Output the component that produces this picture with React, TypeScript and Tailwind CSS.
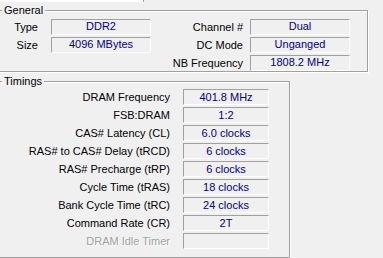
const general: [string, string, string, string][] = [
  ["Type", "DDR2", "Channel #", "Dual"],
  ["Size", "4096 MBytes", "DC Mode", "Unganged"],
  ["", "", "NB Frequency", "1808.2 MHz"],
];

const timings: [string, string, boolean?][] = [
  ["DRAM Frequency", "401.8 MHz"],
  ["FSB:DRAM", "1:2"],
  ["CAS# Latency (CL)", "6.0 clocks"],
  ["RAS# to CAS# Delay (tRCD)", "6 clocks"],
  ["RAS# Precharge (tRP)", "6 clocks"],
  ["Cycle Time (tRAS)", "18 clocks"],
  ["Bank Cycle Time (tRC)", "24 clocks"],
  ["Command Rate (CR)", "2T"],
  ["DRAM Idle Timer", "", true],
];

const ValueBox = ({ value, width }: { value: string; width: string }) => (
  <div
    className={`${width} h-[16px] flex items-center justify-center border border-t-[#a0a0a0] border-l-[#a0a0a0] border-b-white border-r-white bg-[#f0f0f0] text-[#000080] leading-none`}
  >
    {value}
  </div>
);

const Frame = ({ title, className, children }: { title: string; className: string; children: React.ReactNode }) => (
  <div
    className={`relative ml-[-4px] border border-[#a0a0a0] shadow-[1px_1px_0_#ffffff,inset_1px_1px_0_#ffffff] ${className}`}
  >
    <span className="absolute left-[5px] top-[-7px] px-[2px] bg-[#f0f0f0] leading-[13px]">{title}</span>
    {children}
  </div>
);

export default function App() {
  return (
    <div
      className="w-[383px] h-[258px] overflow-hidden bg-[#f0f0f0] text-[11px] text-black flex flex-col"
      style={{ fontFamily: '"Liberation Sans", Arial, sans-serif' }}
    >
      <div className="w-[144px] h-[2px] bg-white border-r border-[#a0a0a0]" />

      {/* General */}
      <Frame title="General" className="mt-[8px] w-[372px] h-[70px] pt-[8px]">
        <div className="flex flex-col gap-[2px]">
          {general.map(([l1, v1, l2, v2], i) => (
            <div key={i} className="flex items-center h-[16px]">
              <div className="w-[41px] text-right">{l1}</div>
              <div className="ml-[13px] w-[100px]">
                {v1 && <ValueBox value={v1} width="w-[100px]" />}
              </div>
              <div className="w-[92px] text-right">{l2}</div>
              <div className="ml-[7px]">
                <ValueBox value={v2} width="w-[100px]" />
              </div>
            </div>
          ))}
        </div>
      </Frame>

      {/* Timings */}
      <Frame title="Timings" className="mt-[9px] w-[294px] h-[200px] pt-[7px]">
        <div className="flex flex-col gap-[2px]">
          {timings.map(([label, value, disabled]) => (
            <div key={label} className="flex items-center h-[16px]">
              <div
                className={`w-[173px] text-right ${disabled ? "text-[#a0a0a0] [text-shadow:1px_1px_0_#ffffff]" : ""}`}
              >
                {label}
              </div>
              <div className="ml-[13px]">
                <ValueBox value={value} width="w-[86px]" />
              </div>
            </div>
          ))}
        </div>
      </Frame>
    </div>
  );
}
